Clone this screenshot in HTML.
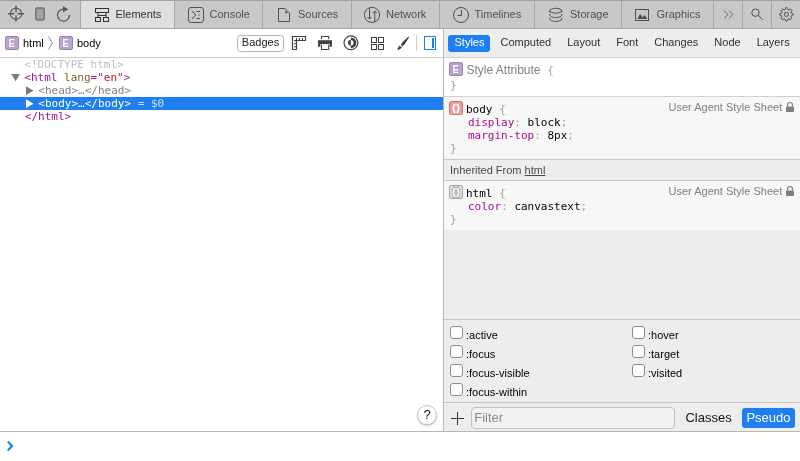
<!DOCTYPE html>
<html lang="en">
<head>
<meta charset="utf-8">
<title>Web Inspector</title>
<style>
*{box-sizing:border-box;margin:0;padding:0}
body{will-change:transform}html,body{width:800px;height:461px;overflow:hidden;background:#fff;font-family:"Liberation Sans",sans-serif;font-size:11px;color:#000}
#tabbar{position:absolute;left:0;top:0;width:800px;height:29px;background:#c8c8c8;border-top:1px solid #a2a2a2;border-bottom:1px solid #a8a8a8}
.tab{position:absolute;top:0;height:27px;border-left:1px solid #a6a6a6;color:#505050;font-size:11px;line-height:13px;white-space:nowrap}
.tab.sel{background:#dedede;color:#303030}
.tab span{position:absolute;top:7px}
svg{position:absolute;overflow:visible}
#navbar{position:absolute;left:0;top:29px;width:443px;height:29px;background:#fff;border-bottom:1px solid #cdcdcd}
#sidebarnav{position:absolute;left:443px;top:29px;width:357px;height:29px;background:#ededed;border-bottom:1px solid #cdcdcd;border-left:1px solid #b8b8b8;white-space:nowrap;padding-left:2px}
#sidebar{position:absolute;left:443px;top:58px;width:357px;height:373px;background:#ededed;border-left:1px solid #b8b8b8}
.sn{display:inline-block;margin:6px 2px 0 2px;padding:0 5.5px 0 6.5px;height:17px;line-height:15px;font-size:11px;color:#303030;border-radius:3px}
.sn.sel{background:#1f7ff0;color:#fff}
.eb{position:absolute;width:14px;height:14px;border-radius:2px;background:#bba3cd;border:1px solid #9c80b2;color:#fff;font-size:11px;font-weight:bold;line-height:12px;text-align:center;text-shadow:0 0 1px #9c80b2}
.crumb{position:absolute;top:37px;font-size:11px;line-height:13px;color:#000}
#dom{position:absolute;left:0;top:58px;width:443px;height:373px}
.mono{font-family:"DejaVu Sans Mono",monospace;font-size:11px;line-height:13px;white-space:pre}
.row{position:absolute;height:13px}
.tag{color:#a21598}.an{color:#7d6322}.av{color:#c41a16}.gray{color:#808080}.dt{color:#c0c0c0}
.rule{position:absolute;left:0;width:356px;background:#fff}
.rule.ua{background:#f7f7f7}
.origin{position:absolute;font-family:"Liberation Sans",sans-serif;font-size:11px;line-height:13px;color:#808080;white-space:nowrap}
.pn{color:#aa0d91}.pu{color:#a0a0a0}
.chk{position:absolute;width:13px;height:13px;border:1px solid #8c8c8c;border-radius:3px;background:#fff}
.pl{position:absolute;font-size:11px;line-height:13px;color:#000;white-space:nowrap}
.ln{position:absolute}
</style>
</head>
<body>
<div id="tabbar"><div class="tab sel" style="left:80px;width:94px"><span style="left:34.5px">Elements</span></div><div class="tab" style="left:174px;width:88px"><span style="left:34.5px">Console</span></div><div class="tab" style="left:262px;width:89px"><span style="left:35px">Sources</span></div><div class="tab" style="left:351px;width:88px"><span style="left:34px">Network</span></div><div class="tab" style="left:439px;width:95px"><span style="left:34.5px">Timelines</span></div><div class="tab" style="left:534px;width:87px"><span style="left:35px">Storage</span></div><div class="tab" style="left:621px;width:92px"><span style="left:34.5px">Graphics</span></div><div class="tab" style="left:713px;width:29px"><span style="left:-714px"></span></div><div class="tab" style="left:742px;width:29px"><span style="left:-743px"></span></div><div class="tab" style="left:771px;width:29px"><span style="left:-772px"></span></div></div>
<div id="navbar"></div>
<div class="eb" style="left:5px;top:36px"><span style="display:inline-block;transform:scaleX(.88)">E</span></div><div class="crumb" style="left:23px">html</div>
<div class="eb" style="left:59px;top:36px"><span style="display:inline-block;transform:scaleX(.88)">E</span></div><div class="crumb" style="left:77px">body</div>
<div style="position:absolute;left:237px;top:35px;width:47px;height:17px;border:1px solid #b4b4b4;border-radius:3.5px;font-size:11px;line-height:12px;text-align:center;color:#222">Badges</div>
<div id="sidebarnav"><span class="sn sel">Styles</span><span class="sn">Computed</span><span class="sn">Layout</span><span class="sn">Font</span><span class="sn">Changes</span><span class="sn">Node</span><span class="sn">Layers</span></div>
<div id="dom" class="mono">
<div class="row dt" style="left:24.300px;top:0">&lt;!DOCTYPE html&gt;</div>
<div class="row" style="left:24.300px;top:13px"><span class="tag">&lt;html </span><span class="an">lang</span><span class="tag">="</span><span class="av">en</span><span class="tag">"&gt;</span></div>
<div class="row gray" style="left:38.300px;top:26px">&lt;head&gt;…&lt;/head&gt;</div>
<div class="row" style="left:0;top:39px;width:443px;background:#1f7ff0"></div>
<div class="row" style="left:38.300px;top:39px;color:#fff">&lt;body&gt;…&lt;/body&gt;<span style="color:rgba(255,255,255,.75)"> = $0</span></div>
<div class="row tag" style="left:24.800px;top:52px">&lt;/html&gt;</div>
</div>
<div id="sidebar">
 <div class="rule" style="top:0;height:38px"></div>
 <div class="ln" style="left:0;top:38px;width:356px;height:1px;background:#cfcfcf"></div>
 <div class="rule ua" style="top:39px;height:62px"></div>
 <div class="ln" style="left:0;top:101px;width:356px;height:1px;background:#c8c8c8"></div>
 <div class="ln" style="left:0;top:122px;width:356px;height:1px;background:#c4c4c4"></div>
 <div class="rule ua" style="top:123px;height:49px"></div>
 <div class="ln" style="left:0;top:261px;width:356px;height:1px;background:#c4c4c4"></div>
 <div class="ln" style="left:0;top:344px;width:356px;height:1px;background:#c4c4c4"></div>
</div>
<div class="eb" style="left:449px;top:62px"><span style="display:inline-block;transform:scaleX(.88)">E</span></div>
<div class="origin" style="left:466.5px;top:63px;font-size:12px;line-height:15px">Style Attribute</div>
<div class="mono pu" style="position:absolute;left:547.300px;top:64px">{</div>
<div class="mono pu" style="position:absolute;left:450px;top:79px">}</div>

<div class="mono" style="position:absolute;left:466px;top:103px">body <span class="pu">{</span></div>
<div class="mono" style="position:absolute;left:468px;top:116px"><span class="pn">display</span><span class="pu">: </span>block<span class="pu">;</span></div>
<div class="mono" style="position:absolute;left:468px;top:129px"><span class="pn">margin-top</span><span class="pu">: </span>8px<span class="pu">;</span></div>
<div class="mono pu" style="position:absolute;left:450px;top:142px">}</div>
<div class="origin" style="left:668.5px;top:101px">User Agent Style Sheet</div>

<div class="origin" style="left:450px;top:164px;color:#4a4a4a">Inherited From <span style="text-decoration:underline">html</span></div>

<div class="mono" style="position:absolute;left:466px;top:187px">html <span class="pu">{</span></div>
<div class="mono" style="position:absolute;left:468px;top:200px"><span class="pn">color</span><span class="pu">: </span>canvastext<span class="pu">;</span></div>
<div class="mono pu" style="position:absolute;left:450px;top:213px">}</div>
<div class="origin" style="left:668.5px;top:185px">User Agent Style Sheet</div>

<div class="chk" style="left:450px;top:326px"></div><div class="pl" style="left:466px;top:329px">:active</div><div class="chk" style="left:450px;top:345px"></div><div class="pl" style="left:466px;top:348px">:focus</div><div class="chk" style="left:450px;top:364px"></div><div class="pl" style="left:466px;top:367px">:focus-visible</div><div class="chk" style="left:450px;top:383px"></div><div class="pl" style="left:466px;top:386px">:focus-within</div>
<div class="chk" style="left:632px;top:326px"></div><div class="pl" style="left:648px;top:329px">:hover</div><div class="chk" style="left:632px;top:345px"></div><div class="pl" style="left:648px;top:348px">:target</div><div class="chk" style="left:632px;top:364px"></div><div class="pl" style="left:648px;top:367px">:visited</div>

<div style="position:absolute;left:471px;top:407px;width:204px;height:22px;border:1px solid #c2c2c2;border-radius:4px;background:#f1f1f1;font-size:13px;line-height:19px;color:#8c8c8c;padding-left:2.200px">Filter</div>
<div style="position:absolute;left:685.400px;top:410px;font-size:13px;line-height:15px;color:#111">Classes</div>
<div style="position:absolute;left:742px;top:408px;width:53px;height:20px;border-radius:3px;background:#1f7ff0;color:#fff;font-size:13px;line-height:20px;text-align:center">Pseudo</div>

<div style="position:absolute;left:417px;top:405px;width:20px;height:20px;border-radius:10px;border:1px solid #c6c6c6;background:#fff;box-shadow:0 1px 1.5px rgba(0,0,0,.25);font-size:13px;line-height:18px;text-align:center;color:#111">?</div>
<div style="position:absolute;left:0;top:431px;width:800px;height:1px;background:#b8b8b8"></div>
<svg width="800" height="461" viewBox="0 0 800 461" style="left:0;top:0;pointer-events:none;z-index:5"><g fill="none" stroke="#555" stroke-width="1.3"><circle cx="16" cy="13.75" r="5.6" stroke-width="1.1"/><path d="M16 5.800v6.400M16 15.300v6.400M8 13.750h6.400M17.600 13.750h6.400"/></g><rect x="35.800" y="7.950" width="8.400" height="12" rx="1.5" fill="#a2a2a2" stroke="#727272" stroke-width="1.400"/><path d="M63.5 9.100a6 6 0 1 0 6 6" fill="none" stroke="#555" stroke-width="1.250"/><path d="M63 6.200l5.300 3.100-5.300 3z" fill="#555"/><g fill="none" stroke="#333"><rect x="95.5" y="8.5" width="13" height="4"/><rect x="95.5" y="17.5" width="5" height="4"/><rect x="103.5" y="17.5" width="5" height="4"/><path d="M98 12.5v5M106 12.5v5M98 15.5h8"/></g><g fill="none" stroke="#505050"><rect x="188.5" y="7.5" width="15" height="15" rx="2.5"/><path d="M192 11l3.800 4-3.800 4M196.5 11.5h3.5M196.5 18.5h3.5"/><path d="M198 15h2" stroke-opacity=".7"/></g><g fill="none" stroke="#505050"><path d="M278.5 8.5h6.5l4.5 4.5v8.5h-11z"/><path d="M285.300 10.300v2.900h2.900z" fill="#505050" stroke="none"/></g><g fill="none" stroke="#505050"><circle cx="372" cy="14.900" r="7.600"/><path d="M369.5 8v11M367.5 17l2 2 2-2M374.800 22v-11M372.800 13l2-2 2 2"/></g><g fill="none" stroke="#505050"><circle cx="461" cy="15" r="7.5"/><path d="M461.5 10v5.5h-4"/></g><g fill="none" stroke="#505050"><ellipse cx="555.750" cy="10.700" rx="6" ry="2.400"/><path d="M549.750 10.700v1.700M561.750 10.700v1.700M549.750 13.900v1.200c0 1.400 2.700 2.400 6 2.400s6-1 6-2.400v-1.200M549.750 17.800v1.200c0 1.400 2.700 2.400 6 2.400s6-1 6-2.400v-1.200"/></g><g fill="none" stroke="#505050"><rect x="635.5" y="9.5" width="13" height="11"/><path d="M637.300 18.900l1.800-3.200c.7-1.5 1.700-1.5 2.400 0l1 1.700.8-1.200c.7-1.100 1.5-1.100 2.200 0l1.700 2.700z" fill="#505050" stroke="none"/></g><path d="M724.200 10.700l3.800 3.800-3.800 3.800M729.100 10.700l3.800 3.800-3.800 3.800" fill="none" stroke="#6a6a6a"/><g fill="none" stroke="#505050"><circle cx="755.5" cy="12.700" r="3.700"/><path d="M758.200 15.400l4.600 4.200"/></g><g fill="none" stroke="#505050"><path d="M793.54 14.07L793.54 14.73L791.25 15.79L790.83 16.81L791.93 18.25L790.30 19.88L788.86 18.78L787.84 19.20L786.78 21.49L786.12 21.49L785.06 19.20L784.04 18.78L782.60 19.88L780.97 18.25L782.07 16.81L781.65 15.79L779.36 14.73L779.36 14.07L781.65 13.01L782.07 11.99L780.97 10.55L782.60 8.92L784.04 10.02L785.06 9.60L786.12 7.31L786.78 7.31L787.84 9.60L788.86 10.02L790.30 8.92L791.93 10.55L790.83 11.99L791.25 13.01Z" stroke-linejoin="round"/><circle cx="786.450" cy="14.400" r="2.050"/></g><path d="M48.5 36.5l4 6.5-4 6.5" fill="none" stroke="#8c8c8c"/><g fill="none" stroke="#424242" stroke-width="1.200"><path d="M292.5 36.5h13v4h-9v9h-4z"/><path d="M296.5 40.5v-2.400M299.5 40.5v-2.400M302.5 40.5v-2.400M296.5 40.600h-2.400M296.5 43.750h-2.400M296.5 46.800h-2.400" stroke-width="1.100"/></g><g fill="#424242" stroke="none"><rect x="318" y="40.200" width="14" height="3.900"/><path d="M318 44h2.300v2.800h-2.300zM329.700 44h2.300v2.800h-2.300z"/></g><g fill="none" stroke="#424242" stroke-width="1.100"><path d="M321.5 39.200v-2.700h7.200v2.700M321.5 44.800v4.700h7.200v-4.700"/></g><circle cx="350.900" cy="42.800" r="6.900" fill="none" stroke="#404040" stroke-width="1.150"/><path d="M350.900 37.400A5.400 5.400 0 0 1 350.900 48.200L350.900 45.5A2.700 2.700 0 0 0 350.900 40.100Z" fill="#3c3c3c"/><path d="M350.900 39.800A3 3 0 0 0 350.900 45.800Z" fill="#484848"/><g fill="none" stroke="#404040"><rect x="371.5" y="37.5" width="5" height="5"/><rect x="378.5" y="37.5" width="5" height="5"/><rect x="371.5" y="44.5" width="5" height="5"/><rect x="378.5" y="44.5" width="5" height="5"/></g><path d="M408.5 36.5L409.200 37.100L404.900 43.900L402.5 46.200L400.800 44.900L402.600 42Z" fill="#404040"/><path d="M399.600 45.5L401.600 47.100C401.300 49.200 399.200 50.200 396.900 49.300C398.300 48.5 398.400 46.800 399.600 45.5Z" fill="#404040"/><path d="M416.5 35v16" stroke="#cfcfcf"/><rect x="424.5" y="36.5" width="11" height="13" fill="none" stroke="#1f7ff0"/><path d="M433 38v10" stroke="#1f7ff0" stroke-width="2"/><path d="M11.300 73.900h8.600l-4.300 7.300z" fill="#7a7a7a"/><path d="M26 86.300v8.800l7.600-4.400z" fill="#7a7a7a"/><path d="M26 99.300v8.800l7.600-4.400z" fill="#fff"/><path d="M8.400 442.300l3.700 3.700-3.700 3.700" fill="none" stroke="#1f7ff0" stroke-width="2.300" stroke-linecap="round" stroke-linejoin="round"/><g><rect x="786" y="106.5" width="8" height="5.5" rx="0.800" fill="#808080"/><path d="M787.5 106.5v-1.5a2.5 2.5 0 0 1 5 0v1.5" fill="none" stroke="#808080" stroke-width="1.200"/></g><g><rect x="786" y="190.5" width="8" height="5.5" rx="0.800" fill="#808080"/><path d="M787.5 190.5v-1.5a2.5 2.5 0 0 1 5 0v1.5" fill="none" stroke="#808080" stroke-width="1.200"/></g><path d="M451 418.5h13M457.5 412v13" stroke="#333" fill="none"/><rect x="449.5" y="101.5" width="13" height="13" rx="1.800" fill="#ec9c9c" stroke="#cd7474"/><path d="M455.5 104.3c-1.5 0-1.700 .8-1.700 2v.9c0 .8-.6 1.200-1.5 1.200 .9 0 1.5 .4 1.5 1.200v.9c0 1.200 .2 2 1.700 2M456.5 104.3c1.5 0 1.700 .8 1.700 2v.9c0 .8 .6 1.200 1.5 1.200-.9 0-1.5 .4-1.5 1.200v.9c0 1.200-.2 2-1.700 2" fill="none" stroke="#fff" stroke-width="1.700"/><rect x="449.5" y="185.5" width="13" height="13" rx="1.800" fill="#dcdcdc" stroke="#a2a2a2"/><path d="M455.5 188.3c-1.5 0-1.700 .8-1.700 2v.9c0 .8-.6 1.200-1.5 1.200 .9 0 1.5 .4 1.5 1.200v.9c0 1.200 .2 2 1.700 2M456.5 188.3c1.5 0 1.700 .8 1.700 2v.9c0 .8 .6 1.200 1.5 1.200-.9 0-1.5 .4-1.5 1.200v.9c0 1.200-.2 2-1.700 2" fill="none" stroke="#8e8e8e" stroke-width="3.200"/><path d="M455.5 188.3c-1.5 0-1.700 .8-1.700 2v.9c0 .8-.6 1.200-1.5 1.200 .9 0 1.5 .4 1.5 1.200v.9c0 1.200 .2 2 1.700 2M456.5 188.3c1.5 0 1.700 .8 1.700 2v.9c0 .8 .6 1.200 1.5 1.200-.9 0-1.5 .4-1.5 1.200v.9c0 1.200-.2 2-1.700 2" fill="none" stroke="#fff" stroke-width="1.700"/></svg>
</body>
</html>
